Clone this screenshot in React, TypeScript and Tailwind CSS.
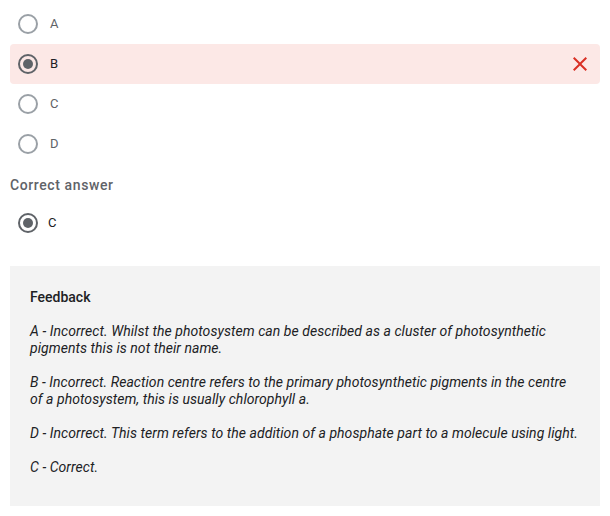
import React from 'react';

const options = ['A', 'B', 'C', 'D'];
const chosen = 'B';

const feedback = [
  'A - Incorrect. Whilst the photosystem can be described as a cluster of photosynthetic pigments this is not their name.',
  'B - Incorrect. Reaction centre refers to the primary photosynthetic pigments in the centre of a photosystem, this is usually chlorophyll a.',
  'D - Incorrect. This term refers to the addition of a phosphate part to a molecule using light.',
  'C - Correct.',
];

function Radio({ checked }: { checked: boolean }) {
  return (
    <div
      className={
        checked
          ? 'w-5 h-5 rounded-full border-2 border-[#5f6368] flex items-center justify-center shrink-0'
          : 'w-5 h-5 rounded-full border-2 border-[#9aa0a6] shrink-0'
      }
    >
      {checked && <div className="w-[10px] h-[10px] rounded-full bg-[#5f6368]" />}
    </div>
  );
}

export default function App() {
  return (
    <div className="w-[610px] h-[516px] bg-white font-['Roboto',sans-serif] px-[10px] pt-[4px] overflow-hidden">
      {/* Options */}
      <div>
        {options.map((opt) => {
          const wrong = opt === chosen;
          return (
            <div
              key={opt}
              className={
                wrong
                  ? 'h-[40px] flex items-center pl-[8px] pr-[8px] rounded-[4px] bg-[#fce8e6]'
                  : 'h-[40px] flex items-center pl-[8px] pr-[8px]'
              }
            >
              <Radio checked={wrong} />
              <span
                className={
                  wrong
                    ? 'ml-[12px] text-[13px] text-[#202124]'
                    : 'ml-[12px] text-[13px] text-[#5f6368]'
                }
              >
                {opt}
              </span>
              {wrong && (
                <svg viewBox="0 0 24 24" className="w-6 h-6 ml-auto fill-[#d93025]">
                  <path d="M19 6.41L17.59 5 12 10.59 6.41 5 5 6.41 10.59 12 5 17.59 6.41 19 12 13.41 17.59 19 19 17.59 13.41 12z" />
                </svg>
              )}
            </div>
          );
        })}
      </div>

      {/* Correct answer */}
      <div className="mt-[11px] text-[14px] leading-[20px] font-medium tracking-[0.6px] text-[#5f6368]">
        Correct answer
      </div>
      <div className="mt-[8px] h-[40px] flex items-center pl-[8px]">
        <Radio checked={true} />
        <span className="ml-[10px] text-[13px] text-[#202124]">C</span>
      </div>

      {/* Feedback */}
      <div className="mt-[23px] bg-[#f3f3f3] px-[20px] pt-[21px] pb-[30px] h-[240px]">
        <div className="text-[14px] leading-[20px] font-medium text-[#202124]">Feedback</div>
        <div className="mt-[16px] space-y-[17px]">
          {feedback.map((line) => (
            <p key={line} className="text-[14px] leading-[17px] italic tracking-[0.05px] text-[#202124]">
              {line}
            </p>
          ))}
        </div>
      </div>
    </div>
  );
}
